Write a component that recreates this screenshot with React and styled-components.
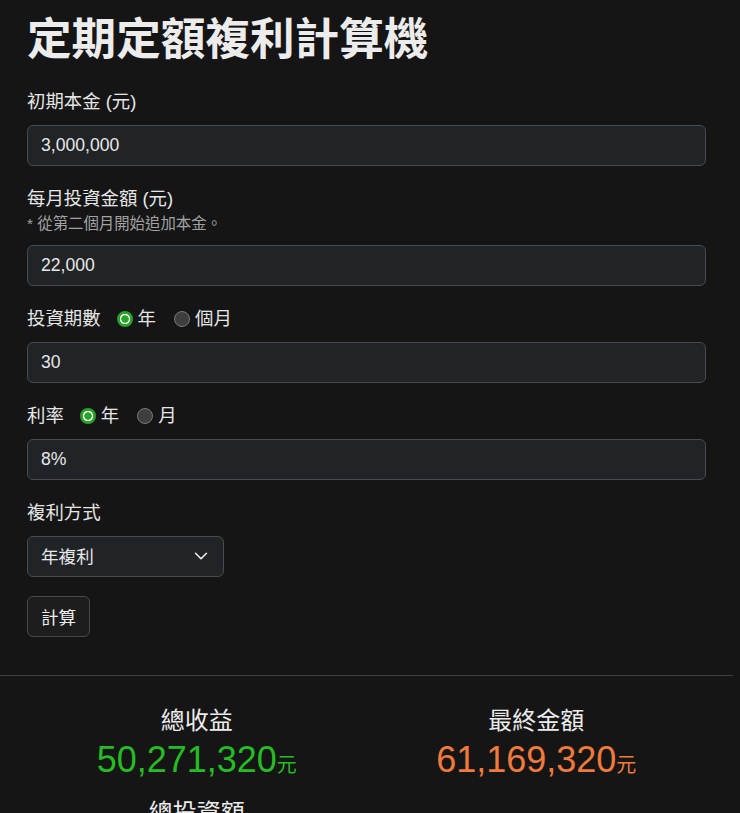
import React, { useState } from 'react';
import styled, { createGlobalStyle } from 'styled-components';
import { ChevronDown } from 'lucide-react';

const GlobalStyle = createGlobalStyle`
  html, body {
    margin: 0;
    padding: 0;
    background: #151515;
  }
  body {
    font-family: "Liberation Sans", "Noto Sans CJK TC", sans-serif;
    color: #e4e4e4;
  }
  * {
    box-sizing: border-box;
  }
`;

const Page = styled.div`
  width: 733px;
  min-height: 813px;
  background: #151515;
`;

const Form = styled.div`
  padding: 16px 27px 0;
`;

const Title = styled.h1`
  margin: 0 0 24px;
  font-size: 44.6px;
  line-height: 48px;
  font-weight: 700;
  color: #ececec;
`;

const Group = styled.div`
  margin-bottom: 19px;
`;

const Label = styled.div`
  display: flex;
  align-items: center;
  font-size: 18.4px;
  line-height: 27px;
  margin-bottom: 10px;
  color: #e6e6e6;
`;

const Hint = styled.div`
  font-size: 15.4px;
  line-height: 21px;
  color: #a3a3a3;
  margin: -9px 0 11px;
`;

const Input = styled.input`
  display: block;
  width: 100%;
  height: 41px;
  padding: 0 13px;
  font: inherit;
  font-size: 17.6px;
  color: #e8e8e8;
  background: #212427;
  border: 1px solid #474b50;
  border-radius: 6px;
  outline: none;
`;

const RadioGroup = styled.div`
  display: flex;
  align-items: center;
  gap: 18px;
  margin-left: 16px;
`;

const RadioLabel = styled.label`
  display: flex;
  align-items: center;
  gap: 5px;
  cursor: pointer;
`;

const Radio = styled.input.attrs({ type: 'radio' })`
  appearance: none;
  margin: 0;
  width: 16px;
  height: 16px;
  border-radius: 50%;
  border: 1px solid #7a7a7a;
  background: #3e3e3e;

  &:checked {
    border: 2px solid #28a428;
    background: radial-gradient(circle, #28a428 0 3.4px, #eef5ee 4px 5px, #28a428 5.5px);
  }
`;

const SelectWrap = styled.div`
  position: relative;
  width: 197px;
`;

const Select = styled.select`
  appearance: none;
  width: 100%;
  height: 41px;
  padding: 0 36px 0 13px;
  font: inherit;
  font-size: 17.6px;
  color: #e8e8e8;
  background: #212427;
  border: 1px solid #474b50;
  border-radius: 6px;
  outline: none;
`;

const Chevron = styled(ChevronDown)`
  position: absolute;
  right: 12px;
  top: 9px;
  color: #f0f0f0;
  pointer-events: none;
`;

const Button = styled.button`
  height: 41px;
  padding: 0 13px;
  font: inherit;
  font-size: 17.6px;
  color: #ededed;
  background: #1d1d1e;
  border: 1px solid #46484b;
  border-radius: 6px;
  cursor: pointer;
`;

const Divider = styled.hr`
  margin: 38px 0 0;
  border: 0;
  border-top: 1px solid #3f3f3f;
`;

const Results = styled.div`
  display: grid;
  grid-template-columns: 1fr 1fr;
  padding: 30px 27px 0;
`;

const Stat = styled.div`
  text-align: center;
  margin-bottom: 11px;
`;

const StatLabel = styled.div`
  font-size: 24px;
  line-height: 30px;
  color: #ececec;
  margin-bottom: 2px;
`;

const StatValue = styled.div`
  font-size: 36px;
  line-height: 44px;
  color: ${({ color }) => color};
`;

const Unit = styled.span`
  font-size: 20px;
`;

const stats = [
  { label: '總收益', value: '50,271,320', color: '#25bb25' },
  { label: '最終金額', value: '61,169,320', color: '#f07a3c' },
  { label: '總投資額', value: '10,898,000', color: '#e6e6e6' },
];

const App = () => {
  const [periodUnit, setPeriodUnit] = useState('year');
  const [rateUnit, setRateUnit] = useState('year');

  return (
    <Page>
      <GlobalStyle />
      <Form>
        <Title>定期定額複利計算機</Title>

        <Group>
          <Label>初期本金 (元)</Label>
          <Input defaultValue="3,000,000" />
        </Group>

        <Group>
          <Label>每月投資金額 (元)</Label>
          <Hint>* 從第二個月開始追加本金。</Hint>
          <Input defaultValue="22,000" />
        </Group>

        <Group>
          <Label>
            投資期數
            <RadioGroup>
              <RadioLabel>
                <Radio
                  name="period"
                  checked={periodUnit === 'year'}
                  onChange={() => setPeriodUnit('year')}
                />
                年
              </RadioLabel>
              <RadioLabel>
                <Radio
                  name="period"
                  checked={periodUnit === 'month'}
                  onChange={() => setPeriodUnit('month')}
                />
                個月
              </RadioLabel>
            </RadioGroup>
          </Label>
          <Input defaultValue="30" />
        </Group>

        <Group>
          <Label>
            利率
            <RadioGroup>
              <RadioLabel>
                <Radio
                  name="rate"
                  checked={rateUnit === 'year'}
                  onChange={() => setRateUnit('year')}
                />
                年
              </RadioLabel>
              <RadioLabel>
                <Radio
                  name="rate"
                  checked={rateUnit === 'month'}
                  onChange={() => setRateUnit('month')}
                />
                月
              </RadioLabel>
            </RadioGroup>
          </Label>
          <Input defaultValue="8%" />
        </Group>

        <Group>
          <Label>複利方式</Label>
          <SelectWrap>
            <Select defaultValue="year">
              <option value="year">年複利</option>
              <option value="month">月複利</option>
            </Select>
            <Chevron size={22} strokeWidth={1.7} />
          </SelectWrap>
        </Group>

        <Button>計算</Button>
      </Form>

      <Divider />

      <Results>
        {stats.map((s) => (
          <Stat key={s.label}>
            <StatLabel>{s.label}</StatLabel>
            <StatValue color={s.color}>
              {s.value}
              <Unit>元</Unit>
            </StatValue>
          </Stat>
        ))}
      </Results>
    </Page>
  );
};

export default App;
